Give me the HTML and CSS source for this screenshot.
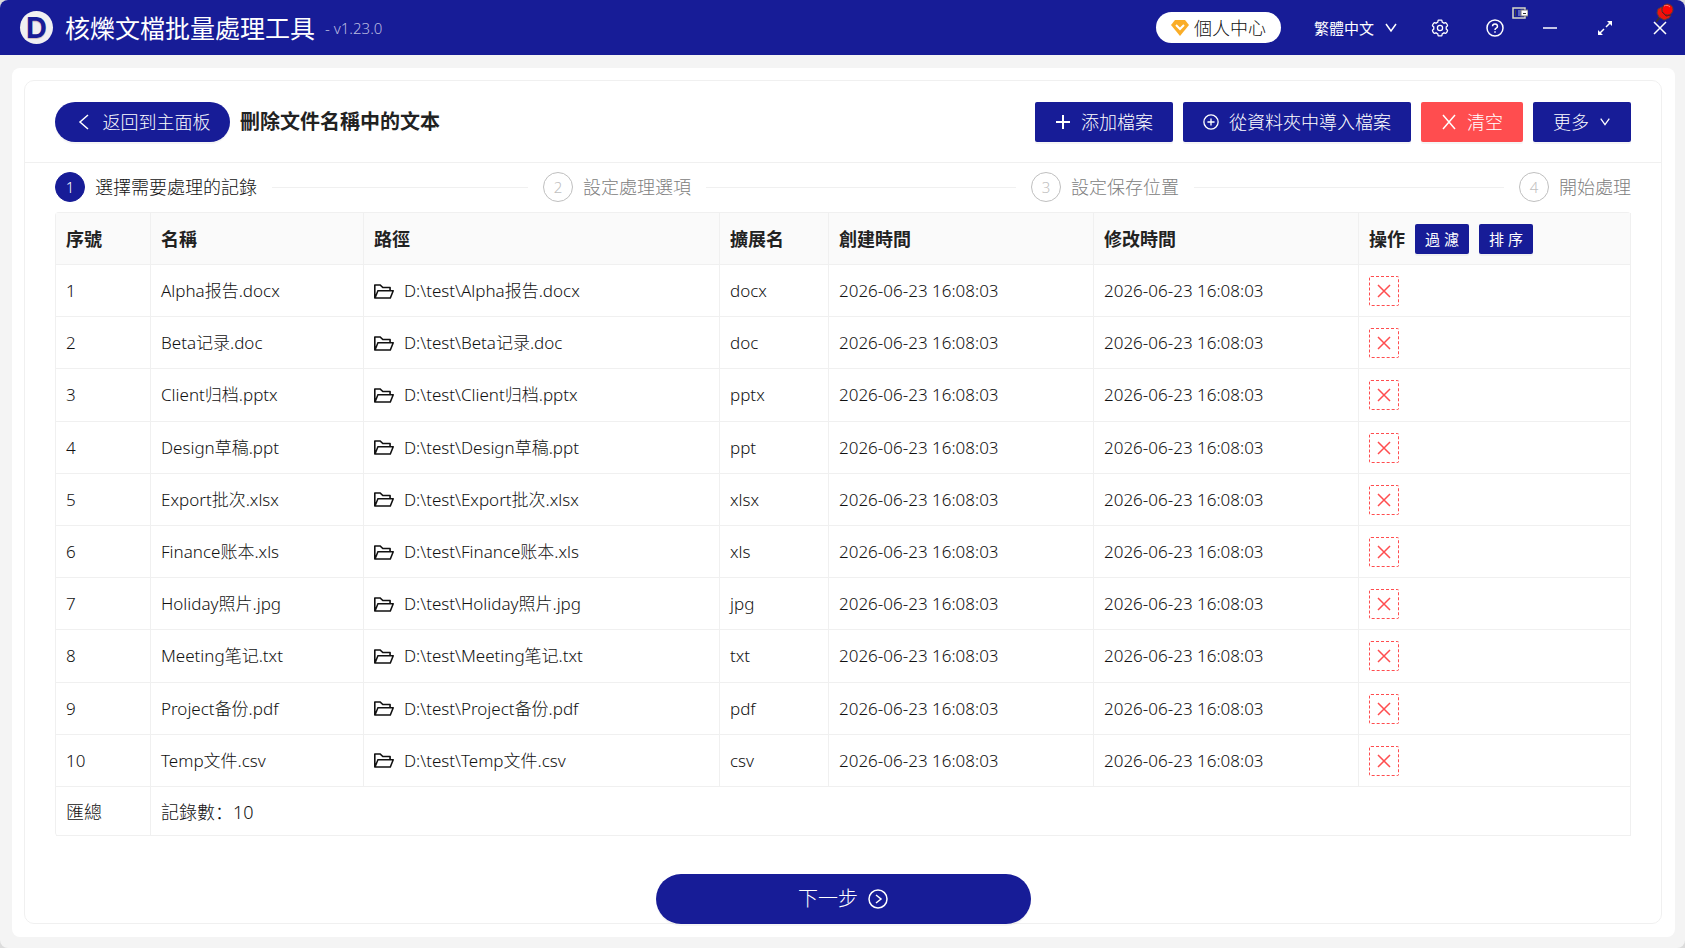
FILE: index.html
```html
<!DOCTYPE html>
<html lang="zh-CN">
<head>
    <meta charset="UTF-8">
    <meta name="viewport" content="width=device-width, initial-scale=1.0">
    <title>核爍文檔批量處理工具</title>
    <link rel="stylesheet" href="styles.css">
</head>
<body>

    <svg class="sprite" aria-hidden="true">
        <symbol id="i-left" viewBox="0 0 18 18"><path d="M13 2 5 9l8 7"/></symbol>
        <symbol id="i-down" viewBox="0 0 14 14"><path d="M2 3l5 7 5-7"/></symbol>
        <symbol id="i-plus" viewBox="0 0 16 16"><path d="M8 1v14M1 8h14"/></symbol>
        <symbol id="i-plus-circle" viewBox="0 0 18 18"><circle cx="9" cy="9" r="8"/><path d="M9 5v8M5 9h8"/></symbol>
        <symbol id="i-close" viewBox="0 0 16 16"><path d="M2 1l12 14M14 1 2 15"/></symbol>
        <symbol id="i-cross" viewBox="0 0 14 14"><path d="M1 1l12 12M13 1 1 13"/></symbol>
        <symbol id="i-next" viewBox="0 0 20 20"><circle cx="10" cy="10" r="9"/><path d="M8 6l5 4-5 4"/></symbol>
        <symbol id="i-folder" viewBox="64 184 896 656"><path d="M928 444H820V330.4c0-17.7-14.3-32-32-32H473L355.7 186.2a8.15 8.15 0 00-5.5-2.2H96c-17.7 0-32 14.3-32 32v592c0 17.7 14.3 32 32 32h698c13 0 24.8-7.9 29.7-20l134-332c1.5-3.8 2.3-7.9 2.3-12 0-17.7-14.3-32-32-32zM136 256h188.500l119.600 114.400H748V444H238c-13 0-24.800 7.900-29.700 20L136 643.200V256zm635.300 512H159l103.300-256h612.400L771.300 768z"/></symbol>
    </svg>

    <div class="window">
        <header class="titlebar">
            <span class="logo">D</span>
            <h1 class="app-name">核爍文檔批量處理工具</h1>
            <span class="version">- v1.23.0</span>

            <button class="account">
                <svg width="18" height="16" viewBox="0 0 18 16"><path d="M4 0h10l4 5-9 11L0 5z" fill="#faad27"/><path d="M5 5l4 4 4-4" fill="none" stroke="#fff" stroke-width="2"/></svg>
                個人中心
            </button>
            <button class="lang">繁體中文 <svg class="icon" width="14" height="14"><use href="#i-down"/></svg></button>

            <div class="tools">
                <button aria-label="設定">
                    <svg class="icon" width="20" height="20" viewBox="-50 -50 1124 1124" stroke-width="72"><path d="M924.800 625.700l-65.500-56c3.100-19 4.700-38.400 4.700-57.800s-1.600-38.800-4.700-57.800l65.500-56a32 32 0 009.300-35.200l-.9-2.600a444 444 0 00-79.700-137.900l-1.800-2.100a32 32 0 00-35.100-9.500l-81.300 28.900c-30-24.600-63.500-44-99.700-57.600l-15.700-85a32 32 0 00-25.800-25.700l-2.700-.5c-52.100-9.400-106.900-9.400-159 0l-2.700.5a32 32 0 00-25.800 25.700l-15.800 85.400a352 352 0 00-99 57.400l-81.900-29.100a32 32 0 00-35.100 9.500l-1.800 2.100a446 446 0 00-79.700 137.900l-.9 2.600c-4.500 12.500-.8 26.500 9.300 35.200l66.300 56.600c-3.100 18.800-4.600 38-4.600 57.100 0 19.200 1.500 38.400 4.600 57.100L99 625.500a32 32 0 00-9.300 35.200l.9 2.600c18.100 50.400 44.900 96.900 79.700 137.900l1.800 2.100a32 32 0 0035.100 9.500l81.900-29.100c29.800 24.500 63.100 43.900 99 57.400l15.800 85.400a32 32 0 0025.800 25.700l2.700.5a449 449 0 00159 0l2.700-.5a32 32 0 0025.800-25.700l15.700-85a350 350 0 0099.700-57.600l81.300 28.900a32 32 0 0035.100-9.500l1.800-2.100c34.800-41.100 61.600-87.500 79.700-137.900l.9-2.600c4.500-12.300.8-26.300-9.300-35z"/><circle cx="512" cy="512" r="145"/></svg>
                </button>
                <button aria-label="說明">
                    <svg class="icon" width="20" height="20" viewBox="0 0 20 20"><circle cx="10" cy="10" r="8"/><path d="M7.500 8.200a2.500 2.300 0 1 1 3.800 2c-.9.500-1.300.9-1.300 1.800"/><path d="M10 13.200v1.500"/></svg>
                </button>
                <button aria-label="最小化">
                    <svg class="icon" width="20" height="20" viewBox="0 0 20 20"><path d="M3 10h14"/></svg>
                </button>
                <button aria-label="最大化">
                    <svg class="icon" width="20" height="20" viewBox="0 0 20 20"><path d="M15 5l-4 4M9 11l-4 4"/><path d="M17 3v5l-5-5zM3 17v-5l5 5z" fill="#fff" stroke="none"/></svg>
                </button>
                <button aria-label="關閉">
                    <svg class="icon" width="20" height="20" viewBox="0 0 20 20"><path d="M4 4l12 12M16 4 4 16"/></svg>
                </button>
            </div>

            <svg class="badge-tablet" width="16" height="12" viewBox="0 0 16 12"><rect x="1" y="1" width="12" height="10" fill="#171c97" stroke="#d8d8c8" stroke-width="1.500"/><path d="M3 3h1v6H3z" fill="#444"/><path d="M6 3h3v6H6z" fill="#5c66c0"/><rect x="9" y="3" width="7" height="6" fill="#fff" stroke="#777"/><path d="M11 6h3v1h-3z" fill="#333"/></svg>
            <svg class="badge-pin" width="18" height="20" viewBox="0 0 18 20"><path d="M4 14l-4 5" stroke="#3c3030" stroke-width="2"/><path d="M2 6l4-2v5l4 4 5-1-2 3-5 2-5-3-2-4z" fill="#f0140e" stroke="#6b3a30"/><circle cx="11.500" cy="6.500" r="5.500" fill="#fb0606" stroke="#5c3a30"/><path d="M8 3c2-1 4-1 6 1" fill="none" stroke="#ff7a70"/><path d="M6 9l4 4 5-1" fill="none" stroke="#7c1010"/></svg>
        </header>

        <main class="panel">
            <section class="card">
                <div class="card-head">
                    <button class="btn btn-back"><svg class="icon" width="18" height="18"><use href="#i-left"/></svg>返回到主面板</button>
                    <h2 class="card-title">刪除文件名稱中的文本</h2>
                    <div class="actions">
                        <button class="btn"><svg class="icon thick" width="16" height="16"><use href="#i-plus"/></svg>添加檔案</button>
                        <button class="btn"><svg class="icon" width="16" height="16"><use href="#i-plus-circle"/></svg>從資料夾中導入檔案</button>
                        <button class="btn btn-danger"><svg class="icon" width="16" height="16"><use href="#i-close"/></svg>清空</button>
                        <button class="btn">更多<svg class="icon" width="12" height="12"><use href="#i-down"/></svg></button>
                    </div>
                </div>

                <div class="card-body">
                    <ol class="steps">
                        <li class="step active"><span class="num">1</span>選擇需要處理的記錄</li>
                        <li class="step"><span class="num">2</span>設定處理選項</li>
                        <li class="step"><span class="num">3</span>設定保存位置</li>
                        <li class="step"><span class="num">4</span>開始處理</li>
                    </ol>

                    <table class="records">
                        <colgroup>
                            <col class="c-no"><col class="c-name"><col class="c-path"><col class="c-ext"><col class="c-time"><col class="c-time"><col class="c-op">
                        </colgroup>
                        <thead>
                            <tr>
                                <th>序號</th>
                                <th>名稱</th>
                                <th>路徑</th>
                                <th>擴展名</th>
                                <th>創建時間</th>
                                <th>修改時間</th>
                                <th>
                                    <div class="op-head">操作 <button class="btn-small">過 濾</button><button class="btn-small">排 序</button></div>
                                </th>
                            </tr>
                        </thead>
                        <tbody id="rows"></tbody>
                        <tfoot>
                            <tr>
                                <td>匯總</td>
                                <td colspan="6">記錄數：10</td>
                            </tr>
                        </tfoot>
                    </table>
                </div>

                <button class="btn btn-next">下一步<svg class="icon" width="20" height="20"><use href="#i-next"/></svg></button>
            </section>
        </main>
    </div>

    <script>
        const files = [
            "Alpha报告.docx", "Beta记录.doc", "Client归档.pptx", "Design草稿.ppt", "Export批次.xlsx",
            "Finance账本.xls", "Holiday照片.jpg", "Meeting笔记.txt", "Project备份.pdf", "Temp文件.csv"
        ];
        const time = "2026-06-23 16:08:03";

        document.getElementById("rows").innerHTML = files.map((name, i) => `
            <tr>
                <td>${i + 1}</td>
                <td>${name}</td>
                <td><div class="path"><svg class="folder" width="20" height="15"><use href="#i-folder"/></svg>D:\\test\\${name}</div></td>
                <td>${name.split(".").pop()}</td>
                <td>${time}</td>
                <td>${time}</td>
                <td><button class="btn-remove" aria-label="刪除"><svg class="icon" width="14" height="14"><use href="#i-cross"/></svg></button></td>
            </tr>`).join("");
    </script>

</body>
</html>
```
FILE: styles.css
```css
* {
    box-sizing: border-box;
}
body {
    margin: 0;
    background: #dcdcdc;
    color: #111;
    font-family: "Noto Sans", "Noto Sans CJK SC", sans-serif;
    font-size: 17px;
    font-weight: 300;
    line-height: 24px;
}
button {
    margin: 0;
    padding: 0;
    border: 0;
    background: none;
    color: inherit;
    font: inherit;
    white-space: nowrap;
    cursor: pointer;
}
.sprite {
    display: none;
}
.icon {
    flex: none;
    fill: none;
    stroke: currentColor;
}
.icon:not([stroke-width]) {
    stroke-width: 1.5;
}
.icon.thick {
    stroke-width: 2;
}
.window {
    display: flex;
    flex-direction: column;
    min-height: 100vh;
    border-radius: 8px;
    background: #f4f4f4;
    overflow: hidden;
}

/* 標題欄 */
.titlebar {
    position: relative;
    display: flex;
    align-items: center;
    height: 55px;
    padding: 0 15px 0 20px;
    background: #171c97;
    color: #fff;
}
.logo {
    width: 33px;
    height: 33px;
    border-radius: 50%;
    background: #f0f0f2;
    color: #171c97;
    font: 700 29px/33px Inter, sans-serif;
    text-align: center;
    text-shadow: 0 1px 1px #c9b4bc;
}
.app-name {
    margin: 0 10px 0 12px;
    font-size: 25px;
    font-weight: 400;
    line-height: 32px;
}
.version {
    color: #b9bbe0;
    font-size: 15px;
}
.account {
    display: flex;
    align-items: center;
    justify-content: center;
    gap: 5px;
    width: 125px;
    height: 31px;
    margin-left: auto;
    border-radius: 16px;
    background: #fff;
    color: #111;
    font-size: 18px;
}
.lang {
    display: flex;
    align-items: center;
    gap: 10px;
    margin: 0 32px 0 33px;
    font-size: 15px;
    font-weight: 400;
}
.tools {
    display: flex;
    gap: 35px;
}
.tools button {
    display: flex;
}
.badge-tablet {
    position: absolute;
    top: 7px;
    right: 157px;
}
.badge-pin {
    position: absolute;
    top: 3px;
    right: 11px;
}

/* 主面板 */
.panel {
    display: flex;
    flex: 1;
    margin: 13px 10px 11px 12px;
    padding: 12px 13px 13px 12px;
    border-radius: 8px;
    background: #fff;
}
.card {
    display: flex;
    flex: 1;
    flex-direction: column;
    border: 1px solid #f0f0f0;
    border-radius: 10px;
}
.card-head {
    display: flex;
    align-items: center;
    gap: 10px;
    padding: 21px 30px 20px;
    border-bottom: 1px solid #f0f0f0;
}
.card-title {
    margin: 0;
    color: #222;
    font-size: 20px;
    font-weight: 700;
}
.actions {
    display: flex;
    gap: 10px;
    margin-left: auto;
}
.btn {
    display: flex;
    align-items: center;
    justify-content: center;
    gap: 10px;
    height: 40px;
    padding: 0 20px;
    border-radius: 2px;
    background: #171c97;
    box-shadow: 0 2px 0 rgba(0, 0, 0, 0.04);
    color: #fff;
    font-size: 18px;
}
.btn-danger {
    background: #ff4d4f;
}
.btn-back {
    width: 175px;
    border-radius: 20px;
}
.btn-next {
    width: 375px;
    height: 50px;
    margin: auto auto -1px;
    border-radius: 25px;
    font-size: 20px;
}
.card-body {
    padding: 9px 30px 0;
}

/* 步驟條 */
.steps {
    display: flex;
    gap: 15px;
    margin: 0 0 10px;
    padding: 0;
    list-style: none;
}
.step {
    display: flex;
    align-items: center;
    gap: 10px;
    color: #808080;
    font-size: 18px;
    line-height: 30px;
}
.step:not(:last-child) {
    flex: 1;
}
.step:not(:last-child)::after {
    content: "";
    flex: 1;
    height: 1px;
    margin-left: 5px;
    background: #f0f0f0;
}
.num {
    width: 30px;
    height: 30px;
    border: 1px solid #bfbfbf;
    border-radius: 50%;
    color: #bfbfbf;
    font-size: 15px;
    line-height: 28px;
    text-align: center;
}
.active {
    color: #111;
}
.active .num {
    border-color: #171c97;
    background: #171c97;
    color: #fff;
}

/* 記錄表格 */
.records {
    width: 100%;
    height: 624px;
    border: 1px solid #f0f0f0;
    border-width: 1px 0 0 1px;
    border-radius: 4px;
    border-spacing: 0;
    table-layout: fixed;
}
.c-no { width: 95px; }
.c-name { width: 213px; }
.c-path { width: 356px; }
.c-ext { width: 109px; }
.c-time { width: 265px; }
.records th,
.records td {
    height: 52px;
    padding: 0 10px;
    border: 1px solid #f0f0f0;
    border-width: 0 1px 1px 0;
    text-align: left;
    white-space: nowrap;
}
.records td {
    padding-top: 1px;
}
.records th {
    background: #fafafa;
    color: #222;
    font-size: 18px;
    font-weight: 700;
}
.records tfoot td {
    height: 49px;
    font-size: 18px;
}
.op-head,
.path {
    display: flex;
    align-items: center;
    gap: 10px;
}
.folder {
    fill: currentColor;
}
.btn-small {
    width: 54px;
    height: 30px;
    border-radius: 2px;
    background: #171c97;
    box-shadow: 0 2px 0 rgba(0, 0, 0, 0.04);
    color: #fff;
    font-size: 15px;
    font-weight: 400;
}
.btn-remove {
    display: flex;
    align-items: center;
    justify-content: center;
    width: 30px;
    height: 30px;
    border: 1px dashed #ff4d4f;
    border-radius: 2px;
    color: #ff4d4f;
}
```
